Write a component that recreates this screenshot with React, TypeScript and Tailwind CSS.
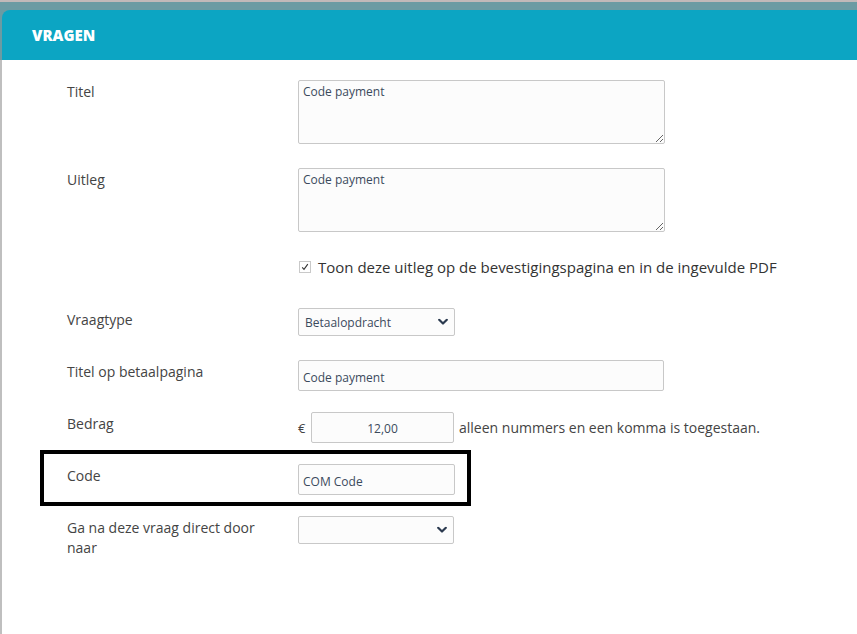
import React from 'react';

const labelCls = "w-[231px] shrink-0 pr-[30px] pt-[2px] text-[14px] leading-5 text-[#444]";
const fieldCls = "rounded-[2px] border border-[#c8c8c8] bg-[#fcfcfc] px-[4px] text-[12px] text-[#3b4a5c] outline-none";

const Chevron = () => (
  <svg width="10" height="7" viewBox="0 0 10 7" className="pointer-events-none absolute right-[7px] top-1/2 -translate-y-1/2">
    <path d="M1.2 1.3 L5 5 L8.8 1.3" fill="none" stroke="#2b3a4f" strokeWidth="2.2" strokeLinecap="round" strokeLinejoin="round" />
  </svg>
);

const Row: React.FC<{ label: string; children: React.ReactNode; className?: string }> = ({ label, children, className }) => (
  <div className={`relative flex items-start ${className ?? ''}`}>
    <div className={labelCls}>{label}</div>
    {children}
  </div>
);

const App: React.FC = () => {
  return (
    <div className="h-[634px] w-[857px] overflow-hidden border-t-2 border-[#c1b9b9] bg-[#6b9ba3] pt-[8px] font-['Open_Sans',sans-serif]">
      {/* Header */}
      <div className="ml-[2px] flex h-[50px] items-center rounded-tl-[8px] bg-[#0ca5c3] pl-[30px]">
        <h2 className="text-[15px] font-extrabold text-white">VRAGEN</h2>
      </div>

      {/* Body */}
      <div className="h-[574px] border-l-2 border-[#bfbfbf] bg-white pl-[65px] pt-[20px]">
        <Row label="Titel">
          <textarea
            defaultValue="Code payment"
            className={`${fieldCls} h-[64px] w-[367px] resize py-[3px] leading-4`}
          />
        </Row>

        <Row label="Uitleg" className="mt-[24px]">
          <textarea
            defaultValue="Code payment"
            className={`${fieldCls} h-[64px] w-[367px] resize py-[3px] leading-4`}
          />
        </Row>

        <div className="mt-[25px] flex items-center pl-[232px]">
          <span className="flex h-[12px] w-[12px] items-center justify-center border border-[#c9c9c9] bg-white">
            <svg width="8" height="8" viewBox="0 0 8 8">
              <path d="M1.2 4.3 L3 6.3 L6.8 1.2" fill="none" stroke="#333" strokeWidth="1.1" />
            </svg>
          </span>
          <span className="ml-[7px] text-[15px] leading-5 text-[#333]">
            Toon deze uitleg op de bevestigingspagina en in de ingevulde PDF
          </span>
        </div>

        <Row label="Vraagtype" className="mt-[31px]">
          <div className="relative">
            <select
              defaultValue="Betaalopdracht"
              className={`${fieldCls} h-[28px] w-[157px] appearance-none pl-[6px] pt-[1px]`}
            >
              <option>Betaalopdracht</option>
            </select>
            <Chevron />
          </div>
        </Row>

        <Row label="Titel op betaalpagina" className="mt-[24px]">
          <input defaultValue="Code payment" className={`${fieldCls} h-[31px] w-[366px] pt-[3px]`} />
        </Row>

        <Row label="Bedrag" className="mt-[21px]">
          <div className="flex items-center">
            <span className="w-[13px] pt-[2px] text-[13px] text-[#444]">€</span>
            <input defaultValue="12,00" className={`${fieldCls} h-[31px] w-[143px] pt-[2px] text-center`} />
            <span className="ml-[5px] text-[14px] text-[#444]">alleen nummers en een komma is toegestaan.</span>
          </div>
        </Row>

        <Row label="Code" className="mt-[21px]">
          <input defaultValue="COM Code" className={`${fieldCls} h-[31px] w-[157px] pt-[3px]`} />
          {/* annotation box */}
          <div className="pointer-events-none absolute left-[-27px] top-[-14px] h-[56px] w-[431px] border-4 border-black" />
        </Row>

        <Row label="Ga na deze vraag direct door naar" className="mt-[21px]">
          <div className="relative">
            <select className={`${fieldCls} h-[28px] w-[156px] appearance-none`}>
              <option></option>
            </select>
            <Chevron />
          </div>
        </Row>
      </div>
    </div>
  );
};

export default App;
